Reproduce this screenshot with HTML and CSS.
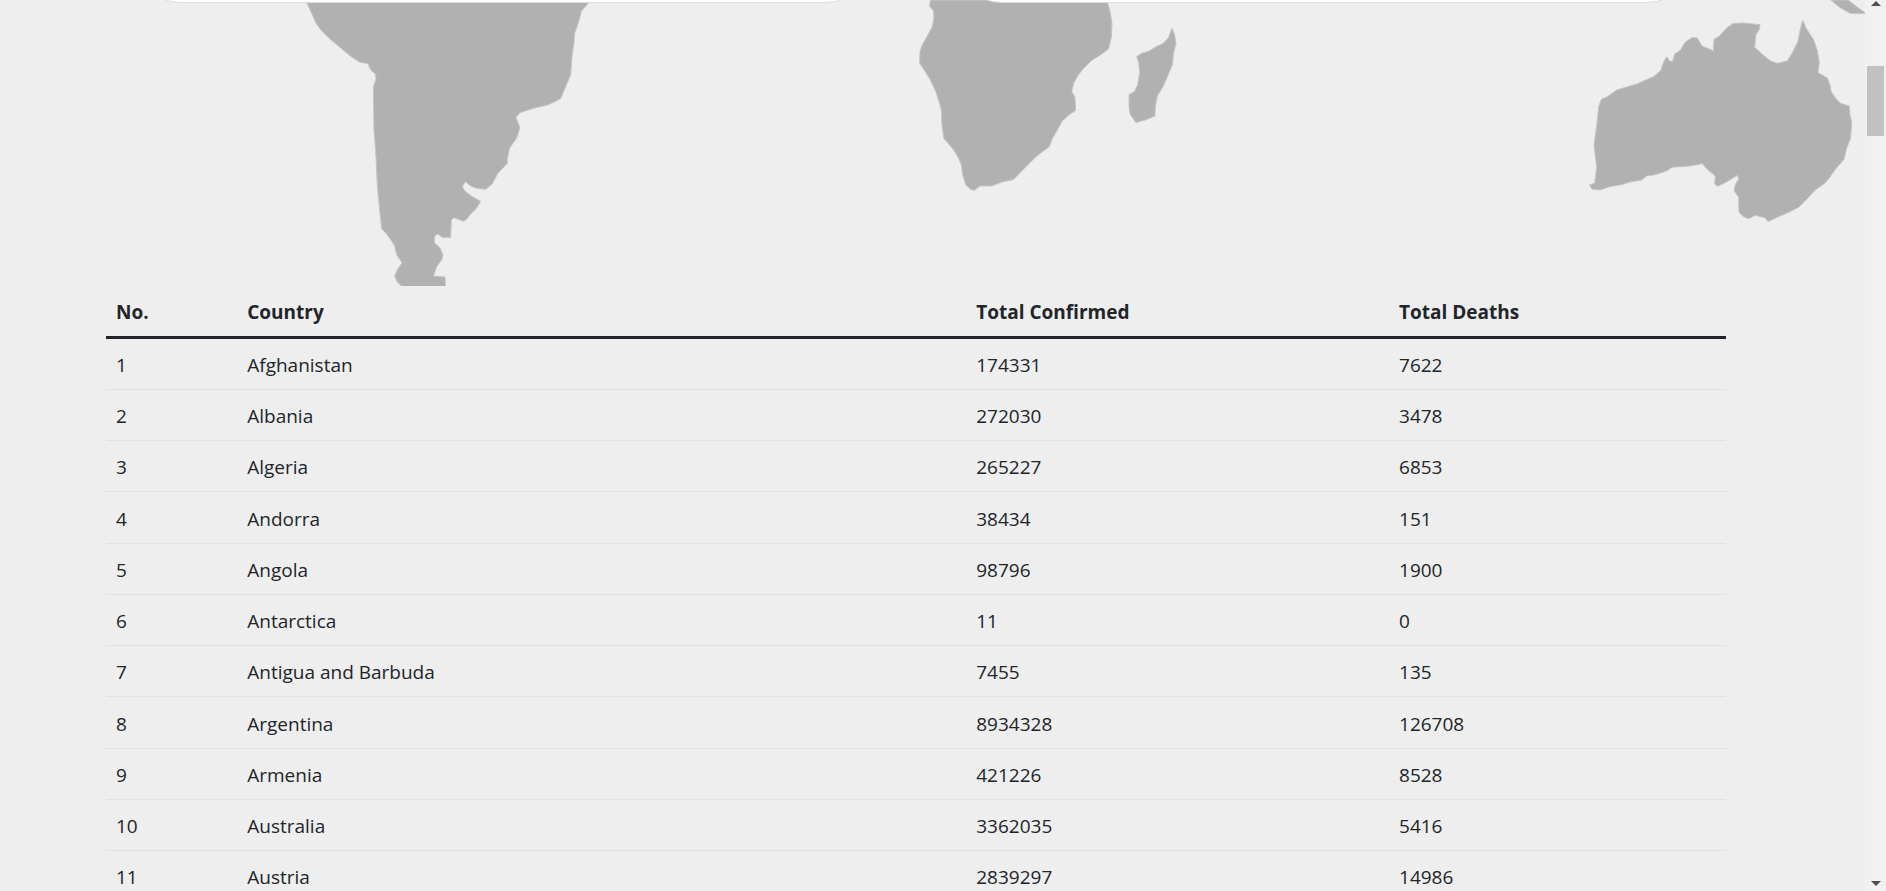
FILE: index.html
```html
<!DOCTYPE html>
<html lang="en">
<head>
<meta charset="utf-8">
<title>Country totals</title>
<link rel="stylesheet" href="styles.css">
</head>
<body>
<div class="page">
  <main class="content">
    <section class="hero">
      <svg class="map" viewBox="0 0 1865 286" aria-hidden="true">
        <g transform="translate(290 0) scale(.33333)">
          <path d="M48 0L56 20 66 42 76 66 94 92 120 117 152 144 182 169 208 186 222 189 234 191 242 210 256 222 258 236 250 262 252 390 258 470 262 560 270 640 275 686 290 702 304 722 314 738 320 764 336 788 322 810 314 828 322 846 336 860H467L465 831 430 828 440 800 456 778 459 764 450 744 433 728 434 708 444 702 456 712 482 712 484 660 492 653 520 664 530 658 544 640 560 624 572 604 544 588 524 572 517 560 526 545 542 558 560 565 588 568 608 550 622 522 652 490 652 476 659 444 680 414 690 384 678 352 690 338 730 325 776 314 812 296 826 262 842 224 847 160 852 130 854 100 866 66 874 34 898 6 902 0Z"/>
        </g>
        <g transform="translate(900 0) scale(.33333)">
          <path d="M92 0L88 18 100 32 102 54 96 82 82 108 68 132 60 154 59 190 74 212 90 238 108 276 118 308 124 330 126 376 132 416 160 448 174 472 184 494 188 524 197 554 212 568 224 571 240 558 276 558 306 546 340 539 372 506 408 470 448 440 456 418 472 390 486 364 510 342 527 332 525 292 515 274 522 248 534 226 552 204 574 182 606 162 626 146 634 112 636 72 630 32 620 0Z"/>
          <path d="M816 84L824 104 828 132 820 162 818 192 804 226 790 258 772 288 766 318 765 348 738 359 708 368 690 342 687 320 687 284 704 274 713 254 719 216 716 188 710 170 724 160 746 154 768 140 790 130 806 112Z"/>
        </g>
        <g transform="translate(1570 0) scale(.33333)">
          <path d="M698 60L708 84 730 118 742 152 748 186 744 218 772 234 780 256 784 276 798 296 812 310 838 318 840 344 845 366 842 414 830 444 822 478 796 508 776 536 764 550 736 570 710 598 686 622 658 636 626 650 594 665 586 654 556 646 536 656 520 650 507 636 506 592 492 572 496 554 506 536 502 526 486 536 464 549 444 559 434 552 436 528 414 510 397 491 360 498 306 502 292 512 256 524 230 528 216 540 180 546 154 554 120 560 90 570 66 568 58 554 74 550 80 500 72 436 80 378 86 320 94 298 112 290 140 270 200 252 250 230 272 212 280 188 290 170 300 184 308 184 314 162 332 150 346 126 368 112 382 114 396 138 430 152 432 118 446 110 470 84 490 70 520 69 570 74 568 88 558 104 554 142 572 158 600 182 622 190 652 182 666 160 684 124 690 92Z"/>
          <path d="M782 0L812 24 840 40 890 41 870 28 850 12 834 0Z"/>
        </g>
      </svg>
      <div class="cards">
        <div class="card"></div>
        <div class="card"></div>
      </div>
    </section>
    <table class="totals">
      <colgroup><col class="col-no"><col class="col-country"><col class="col-confirmed"><col class="col-deaths"></colgroup>
      <thead>
        <tr><th scope="col">No.</th><th scope="col">Country</th><th scope="col">Total Confirmed</th><th scope="col">Total Deaths</th></tr>
      </thead>
      <tbody>
        <tr><td>1</td><td>Afghanistan</td><td>174331</td><td>7622</td></tr>
        <tr><td>2</td><td>Albania</td><td>272030</td><td>3478</td></tr>
        <tr><td>3</td><td>Algeria</td><td>265227</td><td>6853</td></tr>
        <tr><td>4</td><td>Andorra</td><td>38434</td><td>151</td></tr>
        <tr><td>5</td><td>Angola</td><td>98796</td><td>1900</td></tr>
        <tr><td>6</td><td>Antarctica</td><td>11</td><td>0</td></tr>
        <tr><td>7</td><td>Antigua and Barbuda</td><td>7455</td><td>135</td></tr>
        <tr><td>8</td><td>Argentina</td><td>8934328</td><td>126708</td></tr>
        <tr><td>9</td><td>Armenia</td><td>421226</td><td>8528</td></tr>
        <tr><td>10</td><td>Australia</td><td>3362035</td><td>5416</td></tr>
        <tr><td>11</td><td>Austria</td><td>2839297</td><td>14986</td></tr>
      </tbody>
    </table>
  </main>
  <div class="scrollbar">
    <button class="scroll-button" type="button" aria-label="Scroll up">
      <svg viewBox="0 0 10 5" aria-hidden="true"><path d="M5 0L10 5H0Z"/></svg>
    </button>
    <div class="scroll-track"><div class="scroll-thumb"></div></div>
    <button class="scroll-button" type="button" aria-label="Scroll down">
      <svg viewBox="0 0 10 5" aria-hidden="true"><path d="M0 0H10L5 5Z"/></svg>
    </button>
  </div>
</div>
</body>
</html>
```
FILE: styles.css
```css
* {
  box-sizing: border-box;
}

body {
  margin: 0;
  background: #eee;
  color: #212529;
  font-family: "Open Sans", "Noto Sans", sans-serif;
  font-size: 19px;
  line-height: 30px;
}

.page {
  display: grid;
  grid-template-columns: minmax(0, 1fr) 21px;
  height: 100vh;
  overflow: hidden;
}

.content {
  overflow: hidden;
}

.hero {
  position: relative;
  overflow: hidden;
}

.map {
  display: block;
  width: 100%;
  fill: #b1b1b1;
  stroke: #c6c6c6;
  stroke-width: 3;
  stroke-linejoin: round;
}

/* Statistic cards, scrolled almost out of view above the map */
.cards {
  position: absolute;
  bottom: calc(100% - 3px);
  left: 7%;
  right: 9%;
  display: grid;
  grid-template-columns: 1fr 1fr;
  gap: 76px;
}

.card {
  height: 160px;
  border: 1px solid #dcdcdc;
  border-radius: 50px;
  background: #fff;
}

.totals {
  width: calc(100% - 245px);
  margin-left: 106px;
  border-collapse: separate;
  border-spacing: 0;
  table-layout: fixed;
}

.col-no {
  width: 8.1%;
}

.col-country {
  width: 45%;
}

.col-confirmed {
  width: 26.1%;
}

.totals th,
.totals td {
  padding: 11px 10px 9px;
  text-align: left;
}

.totals th {
  border-bottom: 3px solid #212529;
  font-weight: 700;
}

.totals td {
  border-bottom: 1px solid #dfe1e4;
}

.totals tbody tr:nth-child(4n) td {
  height: 52px;
}

.scrollbar {
  display: flex;
  flex-direction: column;
  background: #f1f1f1;
}

.scroll-button {
  display: flex;
  justify-content: center;
  padding: 1px 0 5px;
  border: 0;
  background: transparent;
}

.scroll-button svg {
  width: 10px;
  height: 5px;
  fill: #505050;
}

.scroll-track {
  flex: 1;
  padding: 0 2px;
}

.scroll-thumb {
  height: 8%;
  margin-top: 55px;
  background: #c1c1c1;
}
```
